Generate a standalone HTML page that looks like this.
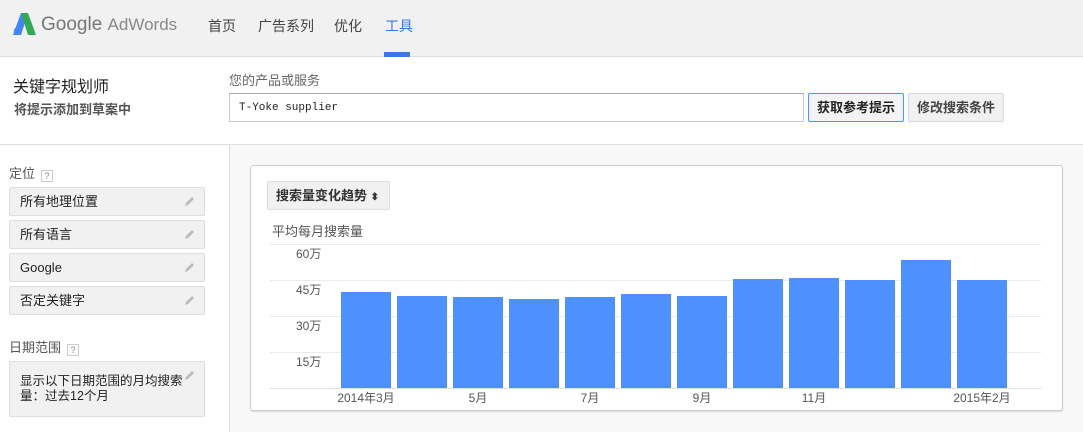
<!DOCTYPE html><html><head><meta charset="utf-8"><style>
*{margin:0;padding:0;box-sizing:border-box}
body{width:1083px;height:432px;overflow:hidden;font-family:"Liberation Sans","Noto Sans CJK SC",sans-serif;font-size:13px;color:#222;background:#fff;position:relative;line-height:1.2}
.a{position:absolute}
.hdr{left:0;top:0;width:1083px;height:57px;background:#f1f1f1;border-bottom:1px solid #ddd}
.nav{top:17px;font-size:14px;color:#444;line-height:18px}
.side{left:9px;width:196px;height:29px;background:#f1f1f1;border:1px solid #ddd;border-radius:2px;padding:0 10px;font-size:13px;line-height:28px}
.pen{position:absolute;right:8px;top:7px;width:12px;height:12px}
.q{display:inline-block;width:12px;height:12px;border:1px solid #ccc;font-size:9px;line-height:10px;text-align:center;color:#888;margin-left:6px;vertical-align:-1px}
.bar{position:absolute;width:50px;background:#4d90fe;bottom:44px}
.gl{position:absolute;left:270px;width:771px;height:1px;background:#ebebeb}
.yl{position:absolute;left:296px;font-size:12px;color:#555}
.xl{position:absolute;top:391px;font-size:12px;color:#555;transform:translateX(-50%)}
</style></head><body>
<div class="a hdr"></div>
<svg class="a" style="left:13px;top:13px" width="24" height="22" viewBox="0 0 24 22"><path d="M8 0h7l-7 22H0z" fill="#4285f4"/><path d="M8 0h7l8 22h-8z" fill="#34a853"/><circle cx="5" cy="18" r="4" fill="#4285f4"/></svg>
<div class="a" style="left:41px;top:14px;font-size:19px;color:#777;line-height:22px">Google <span style="font-size:17px;color:#888">AdWords</span></div>
<div class="a nav" style="left:208px">首页</div>
<div class="a nav" style="left:258px">广告系列</div>
<div class="a nav" style="left:334px">优化</div>
<div class="a nav" style="left:385px;color:#3b78e7">工具</div>
<div class="a" style="left:384px;top:52px;width:26px;height:5px;background:#3b78e7"></div>

<div class="a" style="left:13px;top:77px;font-size:16px;line-height:22px">关键字规划师</div>
<div class="a" style="left:14px;top:101px;font-size:13px;font-weight:bold;color:#555;line-height:18px">将提示添加到草案中</div>
<div class="a" style="left:229px;top:72px;font-size:13px;color:#666;line-height:18px">您的产品或服务</div>
<div class="a" style="left:229px;top:93px;width:575px;height:29px;border:1px solid #ccc;border-top-color:#aaa;padding:0 9px;line-height:28px;font-family:'Liberation Mono',monospace;font-size:11px">T-Yoke supplier</div>
<div class="a" style="left:808px;top:93px;width:96px;height:29px;border:1px solid #4d90fe;border-radius:2px;background:#f3f3f3;font-weight:bold;text-align:center;line-height:27px;color:#222">获取参考提示</div>
<div class="a" style="left:908px;top:93px;width:96px;height:29px;border:1px solid #d9d9d9;border-radius:2px;background:#f1f1f1;font-weight:bold;text-align:center;line-height:27px;color:#444">修改搜索条件</div>
<div class="a" style="left:0;top:144px;width:1083px;height:1px;background:#ddd"></div>
<div class="a" style="left:229px;top:145px;width:854px;height:287px;background:#f8f8f8;border-left:1px solid #ddd"></div>

<div class="a" style="left:9px;top:165px;color:#555;line-height:18px">定位<span class="q">?</span></div>
<div class="a side" style="top:187px">所有地理位置<svg class="pen" viewBox="0 0 12 12"><path d="M1 11l1-3 6-6 2 2-6 6z" fill="#bbb"/></svg></div>
<div class="a side" style="top:220px">所有语言<svg class="pen" viewBox="0 0 12 12"><path d="M1 11l1-3 6-6 2 2-6 6z" fill="#bbb"/></svg></div>
<div class="a side" style="top:253px">Google<svg class="pen" viewBox="0 0 12 12"><path d="M1 11l1-3 6-6 2 2-6 6z" fill="#bbb"/></svg></div>
<div class="a side" style="top:286px">否定关键字<svg class="pen" viewBox="0 0 12 12"><path d="M1 11l1-3 6-6 2 2-6 6z" fill="#bbb"/></svg></div>
<div class="a" style="left:9px;top:339px;color:#555;line-height:18px">日期范围<span class="q">?</span></div>
<div class="a side" style="top:361px;height:56px;padding:12px 10px 0 10px;line-height:15px;font-size:12.5px"><span style="display:block;width:176px">显示以下日期范围的月均搜索量：过去12个月</span><svg class="pen" viewBox="0 0 12 12"><path d="M1 11l1-3 6-6 2 2-6 6z" fill="#bbb"/></svg></div>

<div class="a" style="left:250px;top:165px;width:813px;height:246px;background:#fff;border:1px solid #ccc;border-radius:3px;box-shadow:0 1px 1px #ddd"></div>
<div class="a" style="left:267px;top:181px;width:123px;height:29px;background:#f1f1f1;border:1px solid #ddd;border-radius:2px;font-weight:bold;padding:0 8px;line-height:28px;color:#333">搜索量变化趋势 <span style="font-size:10px">⬍</span></div>
<div class="a" style="left:272px;top:223px;color:#555;line-height:18px">平均每月搜索量</div>
<div class="gl" style="top:244px"></div><div class="gl" style="top:280px"></div><div class="gl" style="top:316px"></div><div class="gl" style="top:352px"></div><div class="gl" style="top:388px;background:#ddd"></div>
<div class="yl" style="top:247px">60万</div><div class="yl" style="top:283px">45万</div><div class="yl" style="top:319px">30万</div><div class="yl" style="top:355px">15万</div>
<div class="bar" style="left:341px;top:292px"></div>
<div class="bar" style="left:397px;top:296px"></div>
<div class="bar" style="left:453px;top:297px"></div>
<div class="bar" style="left:509px;top:299px"></div>
<div class="bar" style="left:565px;top:297px"></div>
<div class="bar" style="left:621px;top:294px"></div>
<div class="bar" style="left:677px;top:296px"></div>
<div class="bar" style="left:733px;top:279px"></div>
<div class="bar" style="left:789px;top:278px"></div>
<div class="bar" style="left:845px;top:280px"></div>
<div class="bar" style="left:901px;top:260px"></div>
<div class="bar" style="left:957px;top:280px"></div>
<div class="xl" style="left:366px">2014年3月</div>
<div class="xl" style="left:478px">5月</div>
<div class="xl" style="left:590px">7月</div>
<div class="xl" style="left:702px">9月</div>
<div class="xl" style="left:814px">11月</div>
<div class="xl" style="left:982px">2015年2月</div>
</body></html>
